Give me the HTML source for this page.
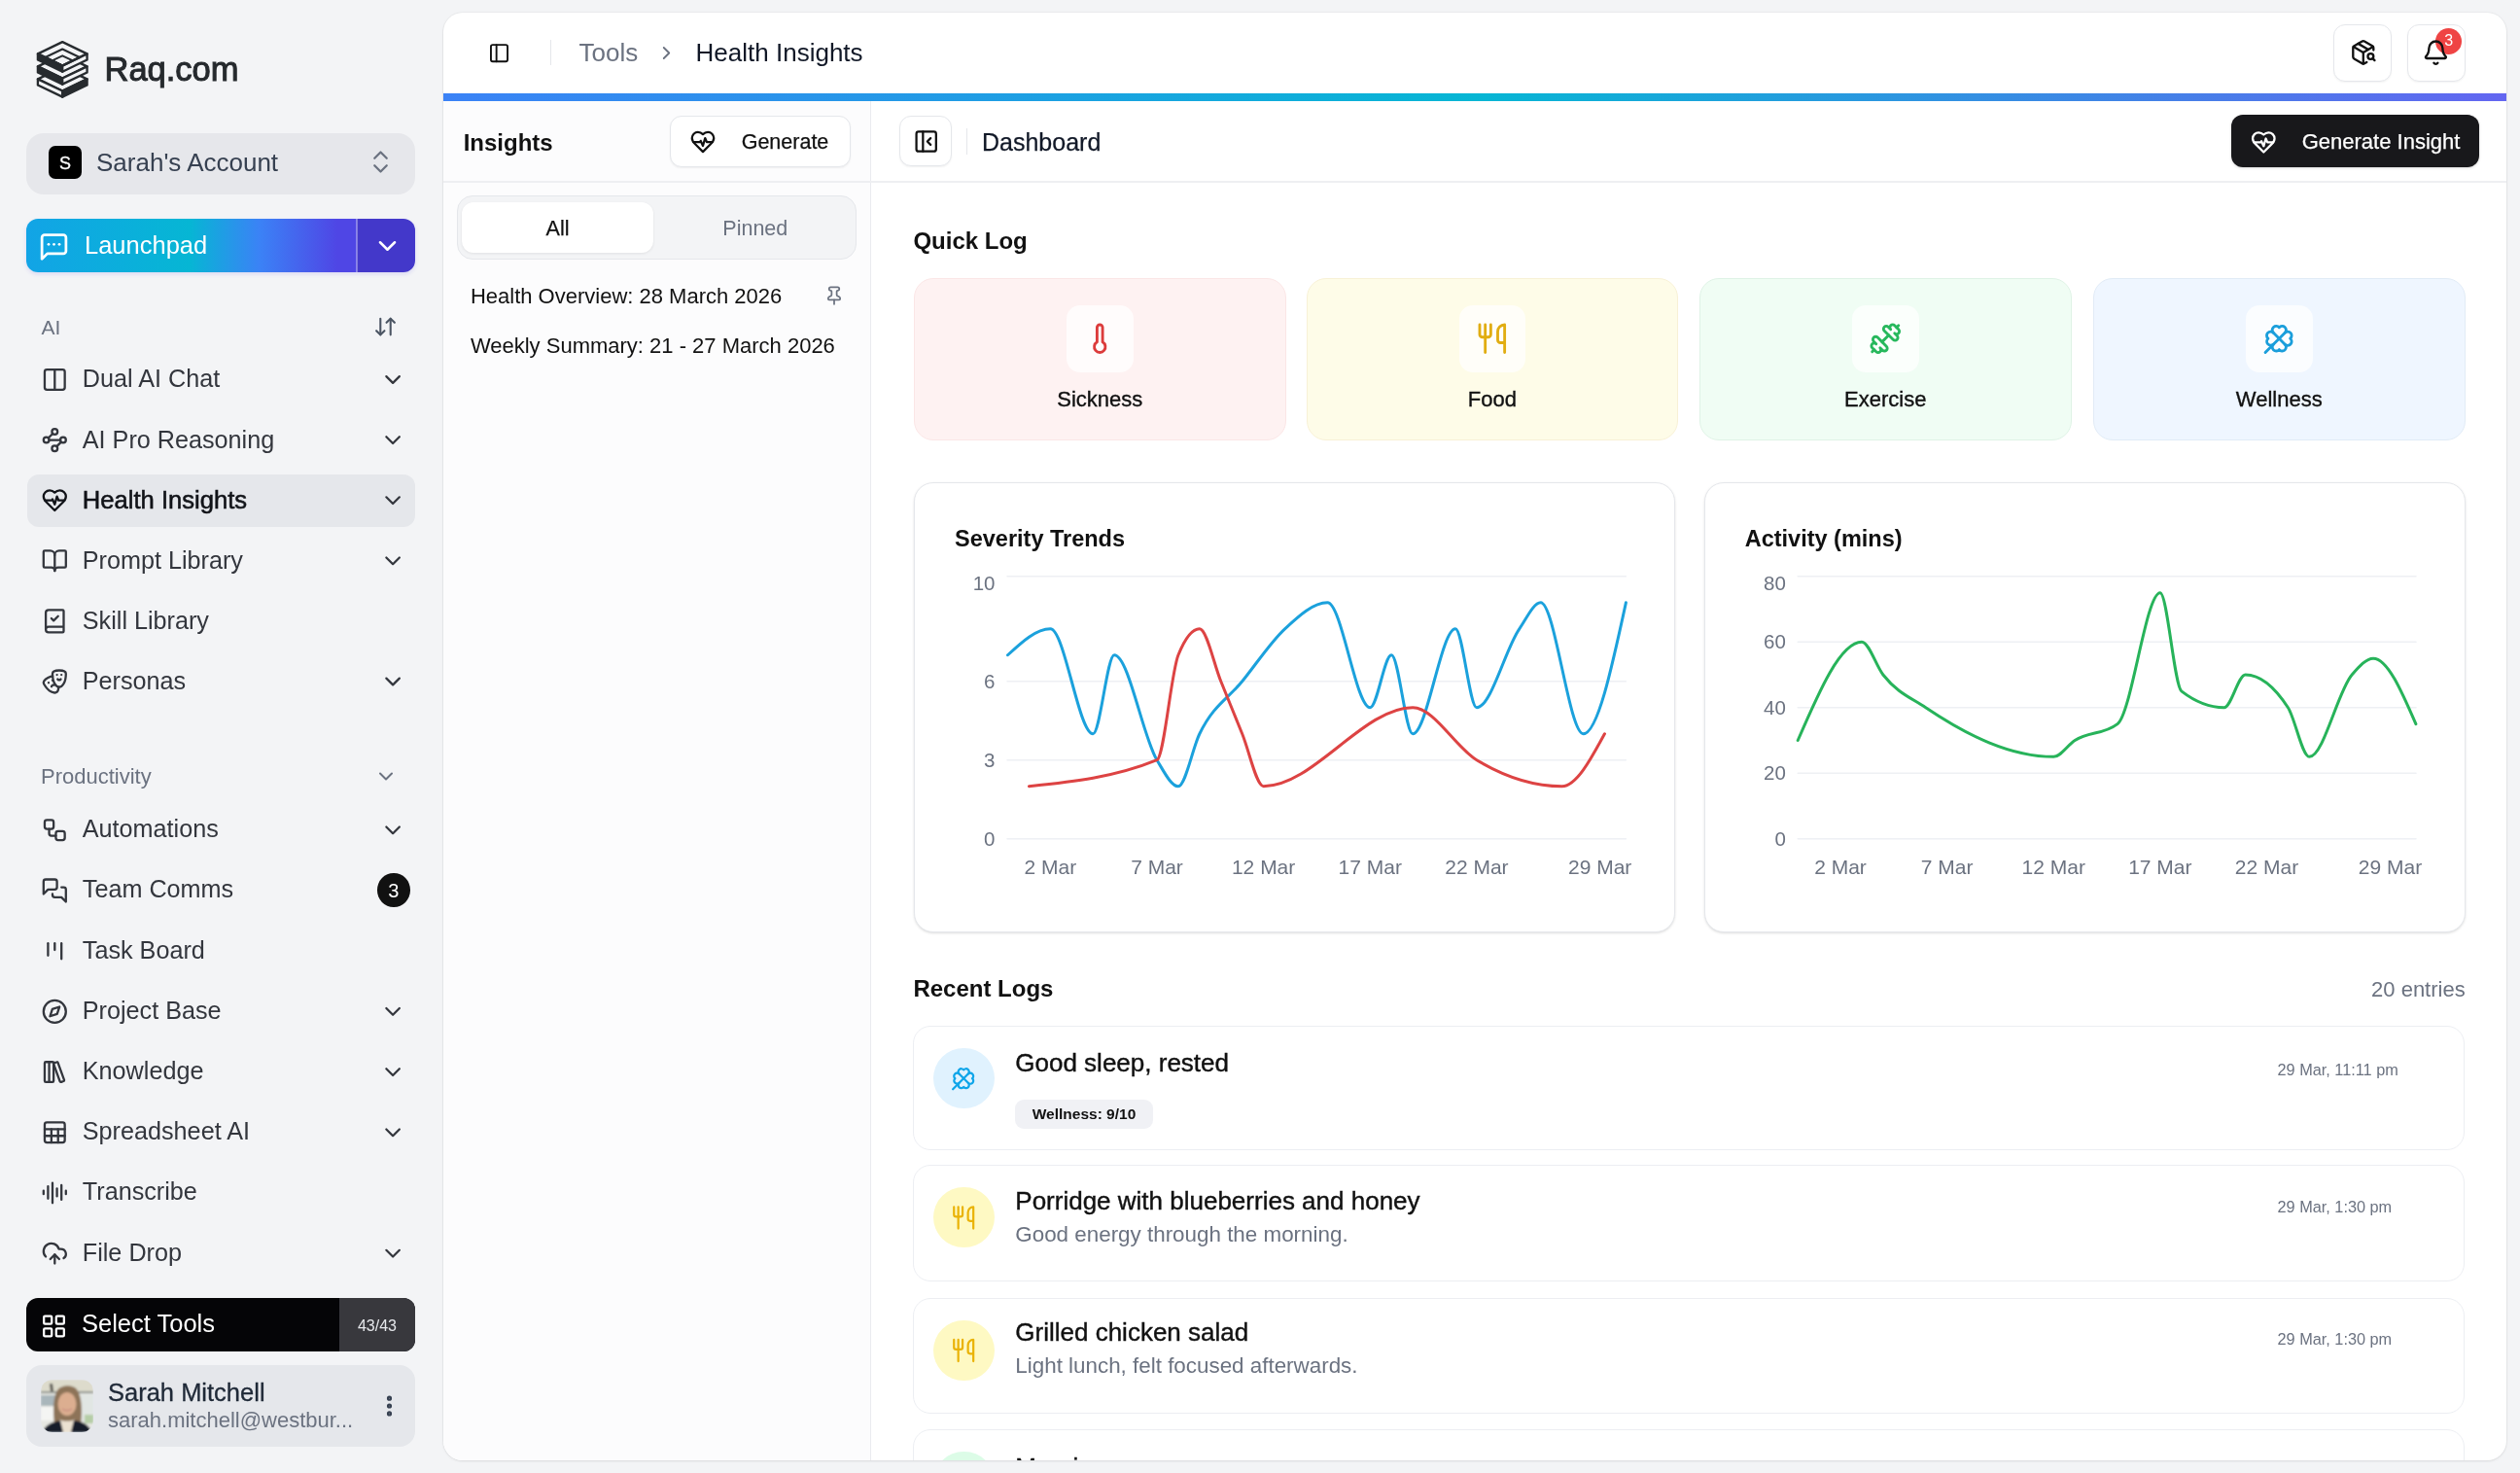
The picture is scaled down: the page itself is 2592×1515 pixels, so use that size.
<!DOCTYPE html>
<html><head><meta charset="utf-8"><title>Health Insights</title>
<style>
html,body{margin:0;padding:0;}
body{width:2592px;height:1515px;overflow:hidden;position:relative;background:#f3f4f6;font-family:"Liberation Sans", sans-serif;}
.t{position:absolute;white-space:nowrap;}
.b{position:absolute;}
</style></head><body>
<div class="b" style="left:456px;top:13px;width:2122px;height:1489px;background:#fff;border-radius:20px;box-shadow:0 1px 3px rgba(0,0,0,.08),0 0 0 1px rgba(0,0,0,.03);"></div>
<div class="b" style="left:0;top:0;width:2592px;height:1502px;overflow:hidden;will-change:transform;">
<svg class="b" style="left:30px;top:35px;width:70px;height:75px" viewBox="0 0 1375 1473"><polygon points="672,670 1170,910 672,1150 175,910" fill="#f3f4f6" stroke="#272b2f" stroke-width="46" stroke-linejoin="round"/><polygon points="175,910 672,1150 672,1270 175,1030" fill="#f3f4f6" stroke="#272b2f" stroke-width="46" stroke-linejoin="round"/><polygon points="672,1150 1170,910 1170,1030 672,1270" fill="#272b2f" stroke="#272b2f" stroke-width="46" stroke-linejoin="round"/><polygon points="672,415 1170,655 672,895 175,655" fill="#f3f4f6" stroke="#272b2f" stroke-width="46" stroke-linejoin="round"/><polygon points="175,655 672,895 672,1015 175,775" fill="#272b2f" stroke="#272b2f" stroke-width="46" stroke-linejoin="round"/><polygon points="672,895 1170,655 1170,775 672,1015" fill="#f3f4f6" stroke="#272b2f" stroke-width="46" stroke-linejoin="round"/><polygon points="672,160 1170,400 672,640 175,400" fill="#f3f4f6" stroke="#272b2f" stroke-width="46" stroke-linejoin="round"/><polygon points="175,400 672,640 672,760 175,520" fill="#272b2f" stroke="#272b2f" stroke-width="46" stroke-linejoin="round"/><polygon points="672,640 1170,400 1170,520 672,760" fill="#f3f4f6" stroke="#272b2f" stroke-width="46" stroke-linejoin="round"/><polyline points="324.1,472.0 672.0,304.0 1020.5999999999999,472.0" fill="none" stroke="#272b2f" stroke-width="40" stroke-linejoin="round"/><polyline points="324.1,472.0 672,640 1020.5999999999999,472.0" fill="none" stroke="#272b2f" stroke-width="40" stroke-linejoin="round"/><polyline points="463.26,539.2 672.0,438.4 881.16,539.2" fill="none" stroke="#272b2f" stroke-width="40" stroke-linejoin="round"/><polyline points="463.26,539.2 672,640 881.16,539.2" fill="none" stroke="#272b2f" stroke-width="40" stroke-linejoin="round"/></svg><div class="t" style="top:53.80px;font-size:34.5px;line-height:34.5px;color:#25292d;font-weight:400;left:107.50px;-webkit-text-stroke:1px #25292d;">Raq.com</div><div class="b" style="left:27.00px;top:137.00px;width:400.00px;height:63.00px;background:#e6e7eb;border-radius:18px;"></div><div class="b" style="left:50.00px;top:150.00px;width:34.00px;height:34.00px;background:#000;border-radius:7px;"></div><div class="t" style="top:158.76px;font-size:18px;line-height:18px;color:#fff;font-weight:400;left:-433.00px;width:1000px;text-align:center;-webkit-text-stroke:0.3px #fff;">S</div><div class="t" style="top:153.99px;font-size:26px;line-height:26px;color:#374151;font-weight:400;left:99.00px;">Sarah's Account</div><div class="b" style="left:27.00px;top:225.00px;width:400.00px;height:55.00px;border-radius:12px;background:linear-gradient(90deg,#12a4e6 0%,#06b6d4 42%,#3b82f6 60%,#4f46e5 80%,#4f46e5 85%,#4338ca 85.01%,#4338ca 100%);box-shadow:0 2px 4px rgba(79,70,229,.15);"></div><div class="b" style="left:366.00px;top:225.00px;width:1.50px;height:55.00px;background:rgba(255,255,255,.35);"></div><div class="t" style="top:240.41px;font-size:25.5px;line-height:25.5px;color:#fff;font-weight:400;left:87.00px;">Launchpad</div><div class="t" style="top:326.22px;font-size:21px;line-height:21px;color:#6b7280;font-weight:400;left:42.60px;">AI</div><div class="b" style="left:28.00px;top:488.00px;width:399.00px;height:54.00px;background:#e5e7eb;border-radius:12px;"></div><div class="t" style="top:377.47px;font-size:25.2px;line-height:25.2px;color:#33363d;font-weight:400;left:84.80px;">Dual AI Chat</div><div class="t" style="top:439.57px;font-size:25.2px;line-height:25.2px;color:#33363d;font-weight:400;left:84.80px;">AI Pro Reasoning</div><div class="t" style="top:502.13px;font-size:25.6px;line-height:25.6px;color:#111318;font-weight:400;left:84.80px;-webkit-text-stroke:0.55px #111318;">Health Insights</div><div class="t" style="top:563.77px;font-size:25.2px;line-height:25.2px;color:#33363d;font-weight:400;left:84.80px;">Prompt Library</div><div class="t" style="top:625.87px;font-size:25.2px;line-height:25.2px;color:#33363d;font-weight:400;left:84.80px;">Skill Library</div><div class="t" style="top:687.97px;font-size:25.2px;line-height:25.2px;color:#33363d;font-weight:400;left:84.80px;">Personas</div><div class="t" style="top:788.38px;font-size:22px;line-height:22px;color:#6b7280;font-weight:400;left:42.00px;">Productivity</div><div class="t" style="top:840.17px;font-size:25.2px;line-height:25.2px;color:#33363d;font-weight:400;left:84.80px;">Automations</div><div class="t" style="top:902.37px;font-size:25.2px;line-height:25.2px;color:#33363d;font-weight:400;left:84.80px;">Team Comms</div><div class="b" style="left:388.00px;top:898.00px;width:33.60px;height:34.60px;background:#111111;border-radius:50%;"></div><div class="t" style="top:906.07px;font-size:20px;line-height:20px;color:#fff;font-weight:400;left:-95.20px;width:1000px;text-align:center;">3</div><div class="t" style="top:964.57px;font-size:25.2px;line-height:25.2px;color:#33363d;font-weight:400;left:84.80px;">Task Board</div><div class="t" style="top:1026.77px;font-size:25.2px;line-height:25.2px;color:#33363d;font-weight:400;left:84.80px;">Project Base</div><div class="t" style="top:1088.97px;font-size:25.2px;line-height:25.2px;color:#33363d;font-weight:400;left:84.80px;">Knowledge</div><div class="t" style="top:1151.17px;font-size:25.2px;line-height:25.2px;color:#33363d;font-weight:400;left:84.80px;">Spreadsheet AI</div><div class="t" style="top:1213.37px;font-size:25.2px;line-height:25.2px;color:#33363d;font-weight:400;left:84.80px;">Transcribe</div><div class="t" style="top:1275.57px;font-size:25.2px;line-height:25.2px;color:#33363d;font-weight:400;left:84.80px;">File Drop</div><div class="b" style="left:27.00px;top:1335.00px;width:400.00px;height:55.00px;background:#050507;border-radius:12px;overflow:hidden;"></div><div class="b" style="left:349.00px;top:1335.00px;width:78.00px;height:55.00px;background:#38383d;border-radius:0 12px 12px 0;"></div><div class="t" style="top:1349.41px;font-size:25.5px;line-height:25.5px;color:#fff;font-weight:400;left:84.00px;">Select Tools</div><div class="t" style="top:1356.46px;font-size:16px;line-height:16px;color:#e5e7eb;font-weight:400;left:-112.00px;width:1000px;text-align:center;">43/43</div><div class="b" style="left:27.00px;top:1404.00px;width:400.00px;height:84.00px;background:#e5e7eb;border-radius:16px;"></div><svg class="b" style="left:42px;top:1419px;width:54px;height:54px" viewBox="0 0 54 54">
<defs><clipPath id="av"><rect width="54" height="54" rx="12"/></clipPath>
<filter id="bl" x="-10%" y="-10%" width="120%" height="120%"><feGaussianBlur stdDeviation="0.9"/></filter></defs>
<g clip-path="url(#av)"><g filter="url(#bl)">
<rect width="54" height="54" fill="#e6e7e1"/>
<rect x="0" y="0" width="54" height="13" fill="#dddbcc"/>
<rect x="0" y="12" width="54" height="2" fill="#8c918c"/>
<rect x="0" y="16" width="15" height="11" fill="#a9b6bb"/>
<rect x="0" y="28" width="15" height="14" fill="#f4f5f3"/>
<rect x="39" y="15" width="15" height="28" fill="#e1e6e3"/>
<rect x="45" y="36" width="9" height="9" fill="#b5cda6"/>
<path d="M9 4 L12 4 L13 12 L10 12 Z" fill="#55524c"/>
<path d="M14 46 C12 32 13 17 17 11 C21 5 33 5 37 10 C42 16 43 32 41 46 Z" fill="#8d7358"/>
<ellipse cx="27" cy="25" rx="9.5" ry="12" fill="#dcae90"/>
<path d="M22 30 Q27 33.5 32 30" stroke="#c98d80" stroke-width="1.4" fill="none"/>
<path d="M19 54 L19.5 41 C22 43 32 43 34.5 41 L35 54 Z" fill="#ece2d2"/>
<path d="M2 54 C4 47 10 44 20 42 L23 54 Z" fill="#151b2b"/>
<path d="M52 54 C50 47 44 43 34 42 L31 54 Z" fill="#151b2b"/>
</g></g></svg><div class="t" style="top:1420.11px;font-size:25.5px;line-height:25.5px;color:#1f2937;font-weight:400;left:111.00px;-webkit-text-stroke:0.3px #1f2937;">Sarah Mitchell</div><div class="t" style="top:1449.88px;font-size:22px;line-height:22px;color:#6b7280;font-weight:400;left:111.00px;">sarah.mitchell@westbur...</div><div class="b" style="left:565.50px;top:41.00px;width:1.50px;height:26.00px;background:#e5e7eb;"></div><div class="t" style="top:41.29px;font-size:26px;line-height:26px;color:#6b7280;font-weight:400;left:595.50px;">Tools</div><div class="t" style="top:41.29px;font-size:26px;line-height:26px;color:#111827;font-weight:400;left:715.60px;">Health Insights</div><div class="b" style="left:2399.60px;top:24.70px;width:60.90px;height:59.30px;background:#fff;border:1px solid #e5e7eb;border-radius:12px;box-shadow:0 1px 2px rgba(0,0,0,.05);box-sizing:border-box;"></div><div class="b" style="left:2475.70px;top:24.70px;width:59.90px;height:59.30px;background:#fff;border:1px solid #e5e7eb;border-radius:12px;box-shadow:0 1px 2px rgba(0,0,0,.05);box-sizing:border-box;"></div><div class="b" style="left:2505.00px;top:28.50px;width:27.30px;height:27.00px;background:#ef4444;border-radius:50%;"></div><div class="t" style="top:34.46px;font-size:16px;line-height:16px;color:#fff;font-weight:400;left:2018.70px;width:1000px;text-align:center;">3</div><div class="b" style="left:456.00px;top:96.00px;width:2122.00px;height:7.50px;background:linear-gradient(90deg,#3b82f6,#06b6d4 50%,#6366f1);"></div><div class="b" style="left:456.00px;top:103.50px;width:440.00px;height:1398.50px;background:#fcfcfd;border-bottom-left-radius:20px;"></div><div class="b" style="left:895.20px;top:103.50px;width:1.30px;height:1398.50px;background:#eaebef;"></div><div class="b" style="left:456.00px;top:186.00px;width:2122.00px;height:1.50px;background:#eeeff2;"></div><div class="t" style="top:134.68px;font-size:24px;line-height:24px;color:#111;font-weight:700;left:476.70px;">Insights</div><div class="b" style="left:689.00px;top:119.00px;width:185.50px;height:52.60px;background:#fff;border:1px solid #e5e7eb;border-radius:12px;box-shadow:0 1px 2px rgba(0,0,0,.06);box-sizing:border-box;"></div><div class="t" style="top:136.10px;font-size:21.5px;line-height:21.5px;color:#111;font-weight:400;left:762.70px;-webkit-text-stroke:0.25px #111;">Generate</div><div class="b" style="left:470.40px;top:201.00px;width:410.60px;height:65.70px;background:#f3f4f6;border:1px solid #e5e7eb;border-radius:16px;box-sizing:border-box;"></div><div class="b" style="left:475.00px;top:207.80px;width:197.00px;height:52.20px;background:#fff;border-radius:12px;box-shadow:0 1px 3px rgba(0,0,0,.08);"></div><div class="t" style="top:225.30px;font-size:21.5px;line-height:21.5px;color:#111;font-weight:400;left:73.50px;width:1000px;text-align:center;-webkit-text-stroke:0.25px #111;">All</div><div class="t" style="top:225.30px;font-size:21.5px;line-height:21.5px;color:#6b7280;font-weight:400;left:276.80px;width:1000px;text-align:center;">Pinned</div><div class="t" style="top:293.68px;font-size:22px;line-height:22px;color:#111;font-weight:400;left:483.90px;">Health Overview: 28 March 2026</div><div class="t" style="top:344.58px;font-size:22px;line-height:22px;color:#111;font-weight:400;left:483.90px;">Weekly Summary: 21 - 27 March 2026</div><div class="b" style="left:925.00px;top:119.00px;width:53.50px;height:52.00px;background:#fff;border:1px solid #e5e7eb;border-radius:12px;box-shadow:0 1px 2px rgba(0,0,0,.06);box-sizing:border-box;"></div><div class="b" style="left:993.50px;top:132.00px;width:1.50px;height:27.00px;background:#e5e7eb;"></div><div class="t" style="top:133.64px;font-size:25px;line-height:25px;color:#111827;font-weight:400;left:1010.00px;-webkit-text-stroke:0.25px #111827;">Dashboard</div><div class="b" style="left:2295.00px;top:118.40px;width:254.80px;height:53.60px;background:#18181b;border-radius:12px;box-shadow:0 1px 3px rgba(0,0,0,.15);"></div><div class="t" style="top:135.38px;font-size:22px;line-height:22px;color:#fff;font-weight:400;left:2367.70px;-webkit-text-stroke:0.25px #fff;">Generate Insight</div><div class="t" style="top:235.68px;font-size:24px;line-height:24px;color:#111;font-weight:700;left:939.40px;">Quick Log</div><div class="b" style="left:940.00px;top:286.00px;width:382.50px;height:166.50px;background:#fef2f2;border:1px solid #fbe6e6;border-radius:20px;box-sizing:border-box;"></div><div class="b" style="left:1096.95px;top:314.00px;width:68.60px;height:68.80px;background:rgba(255,255,255,.72);border-radius:14px;"></div><div class="t" style="top:400.38px;font-size:22px;line-height:22px;color:#111;font-weight:400;left:631.25px;width:1000px;text-align:center;-webkit-text-stroke:0.35px #111;">Sickness</div><div class="b" style="left:1343.60px;top:286.00px;width:382.40px;height:166.50px;background:#fefce8;border:1px solid #f8f1d6;border-radius:20px;box-sizing:border-box;"></div><div class="b" style="left:1500.50px;top:314.00px;width:68.60px;height:68.80px;background:rgba(255,255,255,.72);border-radius:14px;"></div><div class="t" style="top:400.38px;font-size:22px;line-height:22px;color:#111;font-weight:400;left:1034.80px;width:1000px;text-align:center;-webkit-text-stroke:0.35px #111;">Food</div><div class="b" style="left:1748.00px;top:286.00px;width:382.50px;height:166.50px;background:#f0fdf4;border:1px solid #dff3e6;border-radius:20px;box-sizing:border-box;"></div><div class="b" style="left:1904.95px;top:314.00px;width:68.60px;height:68.80px;background:rgba(255,255,255,.72);border-radius:14px;"></div><div class="t" style="top:400.38px;font-size:22px;line-height:22px;color:#111;font-weight:400;left:1439.25px;width:1000px;text-align:center;-webkit-text-stroke:0.35px #111;">Exercise</div><div class="b" style="left:2153.00px;top:286.00px;width:382.60px;height:166.50px;background:#eff6ff;border:1px solid #e1ebf6;border-radius:20px;box-sizing:border-box;"></div><div class="b" style="left:2310.00px;top:314.00px;width:68.60px;height:68.80px;background:rgba(255,255,255,.72);border-radius:14px;"></div><div class="t" style="top:400.38px;font-size:22px;line-height:22px;color:#111;font-weight:400;left:1844.30px;width:1000px;text-align:center;-webkit-text-stroke:0.35px #111;">Wellness</div><div class="b" style="left:939.80px;top:495.90px;width:783.20px;height:463.60px;background:#fff;border:1px solid #e5e7eb;border-radius:20px;box-shadow:0 1px 3px rgba(0,0,0,.09),0 1px 2px rgba(0,0,0,.05);box-sizing:border-box;"></div><div class="t" style="top:543.41px;font-size:23.5px;line-height:23.5px;color:#111;font-weight:700;left:982.00px;">Severity Trends</div><div class="b" style="left:1752.50px;top:495.90px;width:783.50px;height:463.60px;background:#fff;border:1px solid #e5e7eb;border-radius:20px;box-shadow:0 1px 3px rgba(0,0,0,.09),0 1px 2px rgba(0,0,0,.05);box-sizing:border-box;"></div><div class="t" style="top:543.41px;font-size:23.5px;line-height:23.5px;color:#111;font-weight:700;left:1794.70px;">Activity (mins)</div><div class="t" style="top:590.35px;font-size:20.5px;line-height:20.5px;color:#6b7280;font-weight:400;left:23.50px;width:1000px;text-align:right;">10</div><div class="t" style="top:690.65px;font-size:20.5px;line-height:20.5px;color:#6b7280;font-weight:400;left:23.50px;width:1000px;text-align:right;">6</div><div class="t" style="top:771.55px;font-size:20.5px;line-height:20.5px;color:#6b7280;font-weight:400;left:23.50px;width:1000px;text-align:right;">3</div><div class="t" style="top:852.55px;font-size:20.5px;line-height:20.5px;color:#6b7280;font-weight:400;left:23.50px;width:1000px;text-align:right;">0</div><div class="t" style="top:590.35px;font-size:20.5px;line-height:20.5px;color:#6b7280;font-weight:400;left:836.80px;width:1000px;text-align:right;">80</div><div class="t" style="top:650.15px;font-size:20.5px;line-height:20.5px;color:#6b7280;font-weight:400;left:836.80px;width:1000px;text-align:right;">60</div><div class="t" style="top:717.65px;font-size:20.5px;line-height:20.5px;color:#6b7280;font-weight:400;left:836.80px;width:1000px;text-align:right;">40</div><div class="t" style="top:785.05px;font-size:20.5px;line-height:20.5px;color:#6b7280;font-weight:400;left:836.80px;width:1000px;text-align:right;">20</div><div class="t" style="top:852.55px;font-size:20.5px;line-height:20.5px;color:#6b7280;font-weight:400;left:836.80px;width:1000px;text-align:right;">0</div><div class="t" style="top:881.22px;font-size:21px;line-height:21px;color:#6b7280;font-weight:400;left:580.36px;width:1000px;text-align:center;">2 Mar</div><div class="t" style="top:881.22px;font-size:21px;line-height:21px;color:#6b7280;font-weight:400;left:1393.04px;width:1000px;text-align:center;">2 Mar</div><div class="t" style="top:881.22px;font-size:21px;line-height:21px;color:#6b7280;font-weight:400;left:689.99px;width:1000px;text-align:center;">7 Mar</div><div class="t" style="top:881.22px;font-size:21px;line-height:21px;color:#6b7280;font-weight:400;left:1502.64px;width:1000px;text-align:center;">7 Mar</div><div class="t" style="top:881.22px;font-size:21px;line-height:21px;color:#6b7280;font-weight:400;left:799.63px;width:1000px;text-align:center;">12 Mar</div><div class="t" style="top:881.22px;font-size:21px;line-height:21px;color:#6b7280;font-weight:400;left:1612.25px;width:1000px;text-align:center;">12 Mar</div><div class="t" style="top:881.22px;font-size:21px;line-height:21px;color:#6b7280;font-weight:400;left:909.27px;width:1000px;text-align:center;">17 Mar</div><div class="t" style="top:881.22px;font-size:21px;line-height:21px;color:#6b7280;font-weight:400;left:1721.85px;width:1000px;text-align:center;">17 Mar</div><div class="t" style="top:881.22px;font-size:21px;line-height:21px;color:#6b7280;font-weight:400;left:1018.91px;width:1000px;text-align:center;">22 Mar</div><div class="t" style="top:881.22px;font-size:21px;line-height:21px;color:#6b7280;font-weight:400;left:1831.46px;width:1000px;text-align:center;">22 Mar</div><div class="t" style="top:881.22px;font-size:21px;line-height:21px;color:#6b7280;font-weight:400;left:1145.70px;width:1000px;text-align:center;">29 Mar</div><div class="t" style="top:881.22px;font-size:21px;line-height:21px;color:#6b7280;font-weight:400;left:1958.50px;width:1000px;text-align:center;">29 Mar</div><div class="t" style="top:1004.58px;font-size:24px;line-height:24px;color:#111;font-weight:700;left:939.40px;">Recent Logs</div><div class="t" style="top:1006.78px;font-size:22px;line-height:22px;color:#6b7280;font-weight:400;left:1535.70px;width:1000px;text-align:right;">20 entries</div><div class="b" style="left:939.40px;top:1055.00px;width:1595.60px;height:128.00px;background:#fff;border:1px solid #eceef2;border-radius:18px;box-sizing:border-box;"></div><div class="b" style="left:960.00px;top:1077.80px;width:62.50px;height:62.00px;background:#e0f2fe;border-radius:50%;"></div><div class="t" style="top:1079.89px;font-size:26px;line-height:26px;color:#111;font-weight:400;left:1044.30px;-webkit-text-stroke:0.4px #111;">Good sleep, rested</div><div class="t" style="top:1091.50px;font-size:16.3px;line-height:16.3px;color:#6b7280;font-weight:400;left:2342.50px;">29 Mar, 11:11 pm</div><div class="b" style="left:939.40px;top:1198.30px;width:1595.60px;height:119.80px;background:#fff;border:1px solid #eceef2;border-radius:18px;box-sizing:border-box;"></div><div class="b" style="left:960.00px;top:1221.10px;width:62.50px;height:62.00px;background:#fef9c3;border-radius:50%;"></div><div class="t" style="top:1222.29px;font-size:26px;line-height:26px;color:#111;font-weight:400;left:1044.30px;-webkit-text-stroke:0.4px #111;">Porridge with blueberries and honey</div><div class="t" style="top:1259.14px;font-size:22.4px;line-height:22.4px;color:#6b7280;font-weight:400;left:1044.30px;">Good energy through the morning.</div><div class="t" style="top:1233.20px;font-size:16.3px;line-height:16.3px;color:#6b7280;font-weight:400;left:2342.50px;">29 Mar, 1:30 pm</div><div class="b" style="left:939.40px;top:1334.80px;width:1595.60px;height:119.50px;background:#fff;border:1px solid #eceef2;border-radius:18px;box-sizing:border-box;"></div><div class="b" style="left:960.00px;top:1357.60px;width:62.50px;height:62.00px;background:#fef9c3;border-radius:50%;"></div><div class="t" style="top:1356.79px;font-size:26px;line-height:26px;color:#111;font-weight:400;left:1044.30px;-webkit-text-stroke:0.4px #111;">Grilled chicken salad</div><div class="t" style="top:1393.64px;font-size:22.4px;line-height:22.4px;color:#6b7280;font-weight:400;left:1044.30px;">Light lunch, felt focused afterwards.</div><div class="t" style="top:1368.70px;font-size:16.3px;line-height:16.3px;color:#6b7280;font-weight:400;left:2342.50px;">29 Mar, 1:30 pm</div><div class="b" style="left:939.40px;top:1469.80px;width:1595.60px;height:130.20px;background:#fff;border:1px solid #eceef2;border-radius:18px;box-sizing:border-box;"></div><div class="b" style="left:960.00px;top:1492.60px;width:62.50px;height:62.00px;background:#dcfce7;border-radius:50%;"></div><div class="t" style="top:1496.49px;font-size:26px;line-height:26px;color:#111;font-weight:400;left:1044.30px;-webkit-text-stroke:0.4px #111;">Morning run</div><div class="b" style="left:1044.30px;top:1130.50px;width:141.60px;height:30.50px;background:#f0f1f5;border-radius:9px;"></div><div class="t" style="top:1137.88px;font-size:15.5px;line-height:15.5px;color:#111;font-weight:700;left:615.00px;width:1000px;text-align:center;">Wellness: 9/10</div>
<svg class="b" style="left:0;top:0;width:2592px;height:1515px" viewBox="0 0 2592 1515" fill="none" stroke-linecap="round" stroke-linejoin="round"><line x1="1036" x2="1672.4" y1="592.8" y2="592.8" stroke="#eef0f4" stroke-width="1.5"/><line x1="1036" x2="1672.4" y1="700.8" y2="700.8" stroke="#eef0f4" stroke-width="1.5"/><line x1="1036" x2="1672.4" y1="781.7" y2="781.7" stroke="#eef0f4" stroke-width="1.5"/><line x1="1036" x2="1672.4" y1="862.7" y2="862.7" stroke="#eef0f4" stroke-width="1.5"/><line x1="1849.2" x2="2485" y1="592.8" y2="592.8" stroke="#eef0f4" stroke-width="1.5"/><line x1="1849.2" x2="2485" y1="660.3" y2="660.3" stroke="#eef0f4" stroke-width="1.5"/><line x1="1849.2" x2="2485" y1="727.8" y2="727.8" stroke="#eef0f4" stroke-width="1.5"/><line x1="1849.2" x2="2485" y1="795.2" y2="795.2" stroke="#eef0f4" stroke-width="1.5"/><line x1="1849.2" x2="2485" y1="862.7" y2="862.7" stroke="#eef0f4" stroke-width="1.5"/><path d="M1036.50,673.77C1051.12,660.27,1065.74,646.78,1080.36,646.78C1094.97,646.78,1109.59,754.74,1124.21,754.74C1131.52,754.74,1138.83,673.77,1146.14,673.77C1160.76,673.77,1175.37,757.74,1189.99,781.73C1197.30,793.73,1204.61,808.72,1211.92,808.72C1219.23,808.72,1226.54,769.73,1233.85,754.74C1248.47,724.75,1263.09,718.75,1277.70,700.76C1292.32,682.77,1306.94,660.27,1321.56,646.78C1336.18,633.28,1350.80,619.79,1365.41,619.79C1380.03,619.79,1394.65,727.75,1409.27,727.75C1416.58,727.75,1423.89,673.77,1431.20,673.77C1438.51,673.77,1445.81,754.74,1453.12,754.74C1467.74,754.74,1482.36,646.78,1496.98,646.78C1504.29,646.78,1511.60,727.75,1518.91,727.75C1533.53,727.75,1548.14,667.77,1562.76,646.78C1570.07,636.28,1577.38,619.79,1584.69,619.79C1599.31,619.79,1613.93,754.74,1628.54,754.74C1643.16,754.74,1657.78,687.26,1672.40,619.79" stroke="#1ba1dc" stroke-width="3" fill="none"/><path d="M1058.43,808.72C1102.28,804.22,1146.14,799.72,1189.99,781.73C1197.30,778.73,1204.61,691.76,1211.92,673.77C1219.23,655.78,1226.54,646.78,1233.85,646.78C1241.16,646.78,1248.47,682.77,1255.78,700.76C1263.09,718.75,1270.39,736.75,1277.70,754.74C1285.01,772.73,1292.32,808.72,1299.63,808.72C1350.80,808.72,1401.96,727.75,1453.12,727.75C1475.05,727.75,1496.98,768.56,1518.91,781.73C1548.14,799.29,1577.38,808.72,1606.62,808.72C1621.24,808.72,1635.85,781.73,1650.47,754.74" stroke="#dd4343" stroke-width="3" fill="none"/><path d="M1849.20,761.49C1871.12,710.88,1893.04,660.27,1914.96,660.27C1922.27,660.27,1929.58,684.64,1936.88,694.01C1951.50,712.76,1966.11,717.91,1980.72,727.75C2024.57,757.27,2068.41,778.36,2112.25,778.36C2119.56,778.36,2126.86,766.17,2134.17,761.49C2148.78,752.12,2163.40,755.86,2178.01,744.62C2192.62,733.37,2207.24,609.67,2221.85,609.67C2229.16,609.67,2236.47,705.26,2243.77,710.88C2258.39,722.13,2273.00,727.75,2287.61,727.75C2294.92,727.75,2302.23,694.01,2309.53,694.01C2324.15,694.01,2338.76,705.26,2353.38,727.75C2360.68,739.00,2367.99,778.36,2375.30,778.36C2389.91,778.36,2404.52,710.88,2419.14,694.01C2426.44,685.58,2433.75,677.14,2441.06,677.14C2455.67,677.14,2470.29,710.88,2484.90,744.62" stroke="#27b35a" stroke-width="3" fill="none"/><g transform="translate(376.50 151.50) scale(1.2500)" stroke="#6b7280" stroke-width="1.8"><path d="m7 15 5 5 5-5"/><path d="m7 9 5-5 5 5"/></g><g transform="translate(39.00 237.50) scale(1.3750)" stroke="#fff" stroke-width="2"><path d="M21 15a2 2 0 0 1-2 2H7l-4 4V5a2 2 0 0 1 2-2h14a2 2 0 0 1 2 2z"/><path d="M8 10h.01"/><path d="M12 10h.01"/><path d="M16 10h.01"/></g><g transform="translate(383.50 238.00) scale(1.2500)" stroke="#fff" stroke-width="2"><path d="m6 9 6 6 6-6"/></g><g transform="translate(384.00 323.50) scale(1.0417)" stroke="#4b5563" stroke-width="2"><path d="m3 16 4 4 4-4"/><path d="M7 20V4"/><path d="m21 8-4-4-4 4"/><path d="M17 4v16"/></g><g transform="translate(42.50 376.70) scale(1.1500)" stroke="#33363d" stroke-width="2"><rect width="18" height="18" x="3" y="3" rx="2"/><path d="M12 3v18"/></g><g transform="translate(390.60 377.00) scale(1.1250)" stroke="#33363d" stroke-width="2"><path d="m6 9 6 6 6-6"/></g><g transform="translate(42.50 438.80) scale(1.1500)" stroke="#33363d" stroke-width="2"><circle cx="12" cy="4.5" r="2.5"/><path d="m10.2 6.3-3.9 3.9"/><circle cx="4.5" cy="12" r="2.5"/><path d="M7 12h10"/><circle cx="19.5" cy="12" r="2.5"/><path d="m13.8 17.7 3.9-3.9"/><circle cx="12" cy="19.5" r="2.5"/></g><g transform="translate(390.60 439.10) scale(1.1250)" stroke="#33363d" stroke-width="2"><path d="m6 9 6 6 6-6"/></g><g transform="translate(42.50 500.90) scale(1.1500)" stroke="#111318" stroke-width="2"><path d="M19 14c1.49-1.46 3-3.21 3-5.5A5.5 5.5 0 0 0 16.5 3c-1.76 0-3 .5-4.5 2-1.5-1.5-2.74-2-4.5-2A5.5 5.5 0 0 0 2 8.5c0 2.3 1.5 4.05 3 5.5l7 7Z"/><path d="M3.22 12H9.5l.5-1 2 4.5 2-7 1.5 3.5h5.27"/></g><g transform="translate(390.60 501.20) scale(1.1250)" stroke="#33363d" stroke-width="2"><path d="m6 9 6 6 6-6"/></g><g transform="translate(42.50 563.00) scale(1.1500)" stroke="#33363d" stroke-width="2"><path d="M12 7v14"/><path d="M3 18a1 1 0 0 1-1-1V4a1 1 0 0 1 1-1h5a4 4 0 0 1 4 4 4 4 0 0 1 4-4h5a1 1 0 0 1 1 1v13a1 1 0 0 1-1 1h-6a3 3 0 0 0-3 3 3 3 0 0 0-3-3z"/></g><g transform="translate(390.60 563.30) scale(1.1250)" stroke="#33363d" stroke-width="2"><path d="m6 9 6 6 6-6"/></g><g transform="translate(42.50 625.10) scale(1.1500)" stroke="#33363d" stroke-width="2"><path d="M4 19.5v-15A2.5 2.5 0 0 1 6.5 2H19a1 1 0 0 1 1 1v18a1 1 0 0 1-1 1H6.5a1 1 0 0 1 0-5H20"/><path d="m9 9.5 2 2 4-4"/></g><g transform="translate(42.50 687.20) scale(1.1500)" stroke="#33363d" stroke-width="2"><path d="M10 11h.01"/><path d="M14 6h.01"/><path d="M18 6h.01"/><path d="M6.5 13.1h.01"/><path d="M22 5c0 9-4 12-6 12s-6-3-6-12c0-2 2-3 6-3s6 1 6 3"/><path d="M17.4 9.9c-.8.8-2 .8-2.8 0"/><path d="M10.1 7.1C9 7.2 7.7 7.7 6 8.6c-3.5 2-4.7 3.9-3.7 5.6 4.5 7.8 9.5 8.4 11.2 7.4.9-.5 1.9-2.1 1.9-4.7"/><path d="M9.1 16.5c.3-1.1 1.4-1.7 2.4-1.4"/></g><g transform="translate(390.60 687.50) scale(1.1250)" stroke="#33363d" stroke-width="2"><path d="m6 9 6 6 6-6"/></g><g transform="translate(385.00 786.50) scale(1.0000)" stroke="#6b7280" stroke-width="2"><path d="m6 9 6 6 6-6"/></g><g transform="translate(42.50 840.00) scale(1.1500)" stroke="#33363d" stroke-width="2"><rect width="8" height="8" x="3" y="3" rx="2"/><path d="M7 11v4a2 2 0 0 0 2 2h4"/><rect width="8" height="8" x="13" y="13" rx="2"/></g><g transform="translate(390.60 840.30) scale(1.1250)" stroke="#33363d" stroke-width="2"><path d="m6 9 6 6 6-6"/></g><g transform="translate(42.50 902.20) scale(1.1500)" stroke="#33363d" stroke-width="2"><path d="M14 9a2 2 0 0 1-2 2H6l-4 4V4a2 2 0 0 1 2-2h8a2 2 0 0 1 2 2z"/><path d="M18 9h2a2 2 0 0 1 2 2v11l-4-4h-6a2 2 0 0 1-2-2v-1"/></g><g transform="translate(42.50 964.40) scale(1.1500)" stroke="#33363d" stroke-width="2"><path d="M6 5v11"/><path d="M12 5v6"/><path d="M18 5v14"/></g><g transform="translate(42.50 1026.60) scale(1.1500)" stroke="#33363d" stroke-width="2"><circle cx="12" cy="12" r="10"/><path d="m16.24 7.76-2.12 6.36-6.36 2.12 2.12-6.36 6.36-2.12z"/></g><g transform="translate(390.60 1026.90) scale(1.1250)" stroke="#33363d" stroke-width="2"><path d="m6 9 6 6 6-6"/></g><g transform="translate(42.50 1088.80) scale(1.1500)" stroke="#33363d" stroke-width="2"><rect width="8" height="18" x="3" y="3" rx="1"/><path d="M7 3v18"/><path d="M20.4 18.9c.2.5-.1 1.1-.6 1.3l-1.9.7c-.5.2-1.1-.1-1.3-.6L11.1 5.1c-.2-.5.1-1.1.6-1.3l1.9-.7c.5-.2 1.1.1 1.3.6Z"/></g><g transform="translate(390.60 1089.10) scale(1.1250)" stroke="#33363d" stroke-width="2"><path d="m6 9 6 6 6-6"/></g><g transform="translate(42.50 1151.00) scale(1.1500)" stroke="#33363d" stroke-width="2"><rect width="18" height="18" x="3" y="3" rx="2"/><path d="M3 9h18"/><path d="M3 15h18"/><path d="M9 9v12"/><path d="M15 9v12"/></g><g transform="translate(390.60 1151.30) scale(1.1250)" stroke="#33363d" stroke-width="2"><path d="m6 9 6 6 6-6"/></g><g transform="translate(42.50 1213.20) scale(1.1500)" stroke="#33363d" stroke-width="2"><path d="M2 10v3"/><path d="M6 6v11"/><path d="M10 3v18"/><path d="M14 8v7"/><path d="M18 5v13"/><path d="M22 10v3"/></g><g transform="translate(42.50 1275.40) scale(1.1500)" stroke="#33363d" stroke-width="2"><path d="M12 13v8"/><path d="M4 14.899A7 7 0 1 1 15.71 8h1.79a4.5 4.5 0 0 1 2.5 8.242"/><path d="m8 17 4-4 4 4"/></g><g transform="translate(390.60 1275.70) scale(1.1250)" stroke="#33363d" stroke-width="2"><path d="m6 9 6 6 6-6"/></g><g transform="translate(41.70 1350.20) scale(1.1500)" stroke="#fff" stroke-width="2"><rect width="7" height="7" x="3" y="3" rx="1"/><rect width="7" height="7" x="14" y="3" rx="1"/><rect width="7" height="7" x="14" y="14" rx="1"/><rect width="7" height="7" x="3" y="14" rx="1"/></g><g transform="translate(387.00 1432.50) scale(1.1250)" stroke="#374151" stroke-width="2.6"><circle cx="12" cy="12" r="1"/><circle cx="12" cy="5" r="1"/><circle cx="12" cy="19" r="1"/></g><g transform="translate(502.10 43.30) scale(0.9500)" stroke="#111" stroke-width="2"><rect width="18" height="18" x="3" y="3" rx="2"/><path d="M9 3v18"/></g><g transform="translate(674.50 43.50) scale(0.9167)" stroke="#6b7280" stroke-width="2"><path d="m9 18 6-6-6-6"/></g><g transform="translate(2416.80 39.90) scale(1.1667)" stroke="#111" stroke-width="2"><path d="M21 10V8a2 2 0 0 0-1-1.73l-7-4a2 2 0 0 0-2 0l-7 4A2 2 0 0 0 3 8v8a2 2 0 0 0 1 1.73l7 4a2 2 0 0 0 2 0l2-1.14"/><path d="m7.5 4.27 9 5.15"/><polyline points="3.29 7 12 12 20.71 7"/><line x1="12" x2="12" y1="22" y2="12"/><circle cx="18.5" cy="15.5" r="2.5"/><path d="M20.27 17.27 22 19"/></g><g transform="translate(2491.40 40.20) scale(1.1667)" stroke="#111" stroke-width="2"><path d="M10.268 21a2 2 0 0 0 3.464 0"/><path d="M3.262 15.326A1 1 0 0 0 4 17h16a1 1 0 0 0 .74-1.673C19.41 13.956 18 12.499 18 8A6 6 0 0 0 6 8c0 4.499-1.411 5.956-2.738 7.326"/></g><g transform="translate(709.50 132.50) scale(1.1250)" stroke="#111" stroke-width="2"><path d="M19 14c1.49-1.46 3-3.21 3-5.5A5.5 5.5 0 0 0 16.5 3c-1.76 0-3 .5-4.5 2-1.5-1.5-2.74-2-4.5-2A5.5 5.5 0 0 0 2 8.5c0 2.3 1.5 4.05 3 5.5l7 7Z"/><path d="M3.22 12H9.5l.5-1 2 4.5 2-7 1.5 3.5h5.27"/></g><g transform="translate(847.50 293.50) scale(0.8750)" stroke="#6b7280" stroke-width="2"><path d="M12 17v5"/><path d="M9 10.76a2 2 0 0 1-1.11 1.79l-1.78.9A2 2 0 0 0 5 15.24V16a1 1 0 0 0 1 1h12a1 1 0 0 0 1-1v-.76a2 2 0 0 0-1.11-1.79l-1.78-.9A2 2 0 0 1 15 10.76V7a1 1 0 0 1 1-1 2 2 0 0 0 0-4H8a2 2 0 0 0 0 4 1 1 0 0 1 1 1z"/></g><g transform="translate(939.20 132.00) scale(1.1250)" stroke="#111" stroke-width="2"><rect width="18" height="18" x="3" y="3" rx="2"/><path d="M9 3v18"/><path d="m16 15-3-3 3-3"/></g><g transform="translate(2314.80 132.90) scale(1.1250)" stroke="#fff" stroke-width="2"><path d="M19 14c1.49-1.46 3-3.21 3-5.5A5.5 5.5 0 0 0 16.5 3c-1.76 0-3 .5-4.5 2-1.5-1.5-2.74-2-4.5-2A5.5 5.5 0 0 0 2 8.5c0 2.3 1.5 4.05 3 5.5l7 7Z"/><path d="M3.22 12H9.5l.5-1 2 4.5 2-7 1.5 3.5h5.27"/></g><g transform="translate(1114.15 331.10) scale(1.4250)" stroke="#dc3b3b" stroke-width="2"><path d="M14 4v10.54a4 4 0 1 1-4 0V4a2 2 0 0 1 4 0Z"/></g><g transform="translate(1517.70 331.10) scale(1.4250)" stroke="#e1ad12" stroke-width="2"><path d="M3 2v7c0 1.1.9 2 2 2h4a2 2 0 0 0 2-2V2"/><path d="M7 2v20"/><path d="M21 15V2a5 5 0 0 0-5 5v6c0 1.1.9 2 2 2h3Zm0 0v7"/></g><g transform="translate(1922.15 331.10) scale(1.4250)" stroke="#27b85c" stroke-width="2"><path d="M17.596 12.768a2 2 0 1 0 2.829-2.829l-1.768-1.767a2 2 0 0 0 2.828-2.829l-2.828-2.828a2 2 0 0 0-2.829 2.828l-1.767-1.768a2 2 0 1 0-2.829 2.829z"/><path d="m2.5 21.5 1.4-1.4"/><path d="m20.1 3.9 1.4-1.4"/><path d="M5.343 21.485a2 2 0 1 0 2.829-2.828l1.767 1.768a2 2 0 1 0 2.829-2.829l-6.364-6.364a2 2 0 1 0-2.829 2.829l1.768 1.767a2 2 0 0 0-2.828 2.829z"/><path d="m9.6 14.4 4.8-4.8"/></g><g transform="translate(2327.20 331.10) scale(1.4250)" stroke="#1a9edb" stroke-width="2"><path d="M16.17 7.83 2 22"/><path d="M4.02 12a2.827 2.827 0 1 1 3.81-4.17A2.827 2.827 0 1 1 12 4.02a2.827 2.827 0 1 1 4.17 3.81A2.827 2.827 0 1 1 19.98 12a2.827 2.827 0 1 1-3.81 4.17A2.827 2.827 0 1 1 12 19.98a2.827 2.827 0 1 1-4.17-3.81A1 1 0 1 1 4.02 12"/><path d="m7.83 7.83 8.34 8.34"/></g><g transform="translate(977.90 1095.90) scale(1.1083)" stroke="#0ea5e9" stroke-width="2"><path d="M16.17 7.83 2 22"/><path d="M4.02 12a2.827 2.827 0 1 1 3.81-4.17A2.827 2.827 0 1 1 12 4.02a2.827 2.827 0 1 1 4.17 3.81A2.827 2.827 0 1 1 19.98 12a2.827 2.827 0 1 1-3.81 4.17A2.827 2.827 0 1 1 12 19.98a2.827 2.827 0 1 1-4.17-3.81A1 1 0 1 1 4.02 12"/><path d="m7.83 7.83 8.34 8.34"/></g><g transform="translate(977.90 1239.20) scale(1.1083)" stroke="#eab308" stroke-width="2"><path d="M3 2v7c0 1.1.9 2 2 2h4a2 2 0 0 0 2-2V2"/><path d="M7 2v20"/><path d="M21 15V2a5 5 0 0 0-5 5v6c0 1.1.9 2 2 2h3Zm0 0v7"/></g><g transform="translate(977.90 1375.70) scale(1.1083)" stroke="#eab308" stroke-width="2"><path d="M3 2v7c0 1.1.9 2 2 2h4a2 2 0 0 0 2-2V2"/><path d="M7 2v20"/><path d="M21 15V2a5 5 0 0 0-5 5v6c0 1.1.9 2 2 2h3Zm0 0v7"/></g><g transform="translate(977.90 1510.70) scale(1.1083)" stroke="#22c55e" stroke-width="2"><path d="M17.596 12.768a2 2 0 1 0 2.829-2.829l-1.768-1.767a2 2 0 0 0 2.828-2.829l-2.828-2.828a2 2 0 0 0-2.829 2.828l-1.767-1.768a2 2 0 1 0-2.829 2.829z"/><path d="m2.5 21.5 1.4-1.4"/><path d="m20.1 3.9 1.4-1.4"/><path d="M5.343 21.485a2 2 0 1 0 2.829-2.828l1.767 1.768a2 2 0 1 0 2.829-2.829l-6.364-6.364a2 2 0 1 0-2.829 2.829l1.768 1.767a2 2 0 0 0-2.828 2.829z"/><path d="m9.6 14.4 4.8-4.8"/></g></svg>
</div>
</body></html>
